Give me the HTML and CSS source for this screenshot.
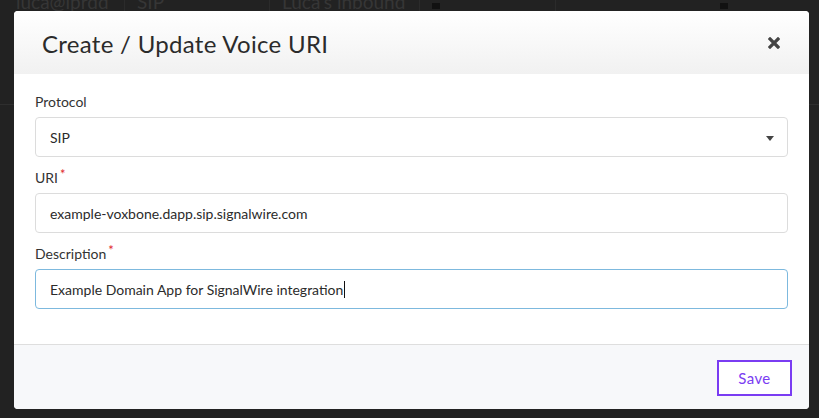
FILE: index.html
```html
<!DOCTYPE html>
<html>
<head>
<meta charset="utf-8">
<link rel="stylesheet" href="styles.css">
</head>
<body>
<div class="page">
  <div class="row">
    <div class="cell c1">luca@iprdd</div>
    <div class="cell c2">SIP</div>
    <div class="cell c3">Luca's inbound</div>
    <div class="cell c4"><span class="mark"></span></div>
    <div class="cell c5"><span class="mark"></span></div>
  </div>
  <div class="rowline"></div>
</div>
<div class="overlay">
  <div class="modal">
    <div class="modal-header">
      <h2 class="modal-title">Create / Update Voice URI</h2>
      <button class="close" aria-label="Close">
        <svg width="12" height="12" viewBox="0 0 12 12"><path d="M2 2 L10 10 M10 2 L2 10" stroke="#444" stroke-width="3.2" stroke-linecap="square"/></svg>
      </button>
    </div>
    <div class="modal-body">
      <div class="group">
        <label class="label">Protocol</label>
        <div class="control select">SIP<span class="caret"></span></div>
      </div>
      <div class="group">
        <label class="label">URI<span class="req">*</span></label>
        <div class="control">example-voxbone.dapp.sip.signalwire.com</div>
      </div>
      <div class="group last">
        <label class="label">Description<span class="req">*</span></label>
        <div class="control focus">Example Domain App for SignalWire integration<span class="cursor"></span></div>
      </div>
    </div>
    <div class="modal-footer">
      <button class="save">Save</button>
    </div>
  </div>
</div>
</body>
</html>
```
FILE: styles.css
```css
* { box-sizing: border-box; }
html, body { margin: 0; padding: 0; }
body {
  width: 819px;
  height: 418px;
  background: #222222;
  font-family: Lato, "Liberation Sans", sans-serif;
  overflow: hidden;
  position: relative;
}
.page { color: #363636; }
.row {
  display: flex;
  height: 112px;
  font-size: 19px;
  line-height: 1;
  margin-top: -8px;
}
.cell { padding: 0 0 0 16px; border-right: 1px solid #2b2b2b; }
.c1 { width: 125px; }
.c2 { width: 145px; padding-left: 12px; }
.c3 { width: 150px; padding-left: 12px; }
.c4 { width: 136px; padding-left: 12px; }
.c5 { flex: 1; border-right: none; padding-left: 164px; }
.mark { display: inline-block; width: 8px; height: 6px; background: #111; margin-top: 6px; }
.rowline { height: 1px; background: #2e2e2e; }

.overlay {
  position: absolute;
  inset: 0;
  padding: 11px 10px 9px 14px;
}
.modal {
  width: 795px;
  height: 398px;
  background: #fff;
  border-radius: 4px;
  overflow: hidden;
  display: flex;
  flex-direction: column;
}
.modal-header {
  height: 63px;
  background: linear-gradient(#ffffff, #f1f1f1);
  display: flex;
  align-items: center;
  justify-content: space-between;
  padding: 0 29px 0 28px;
}
.modal-title {
  margin: 0;
  font-family: Lato, "Liberation Sans", sans-serif;
  font-weight: 400;
  font-size: 24px;
  letter-spacing: 0.3px;
  color: #2b2b2b;
  padding-top: 2px;
}
.close {
  background: none;
  border: none;
  padding: 0;
  width: 12px;
  height: 12px;
  display: flex;
  margin-top: 1px;
}
.modal-body {
  flex: 1;
  padding: 18px 21px 0 21px;
}
.group { margin-bottom: 11px; }
.label {
  display: block;
  font-size: 14px;
  line-height: 20px;
  color: #333;
  margin-bottom: 5px;
}
.req { color: #e0262b; font-size: 13px; position: relative; top: -4px; margin-left: 2px; }
.control {
  height: 40px;
  border: 1px solid #dcdcdc;
  border-radius: 4px;
  padding: 0 14px;
  display: flex;
  align-items: center;
  font-size: 14px;
  color: #2b2b2b;
  position: relative;
}
.control.focus { border-color: #7db9de; }
.select .caret {
  position: absolute;
  right: 13px;
  top: 18px;
  width: 0; height: 0;
  border-left: 4px solid transparent;
  border-right: 4px solid transparent;
  border-top: 5px solid #444;
}
.cursor { display: inline-block; width: 1px; height: 17px; background: #111; margin-left: 1px; }
.modal-footer {
  height: 65px;
  border-top: 1px solid #dedede;
  background: #f7f8fa;
  display: flex;
  align-items: center;
  justify-content: flex-end;
  padding: 0 17px 0 0;
}
.save {
  width: 75px;
  height: 36px;
  border: 2px solid #7a3cf2;
  background: #fff;
  color: #7a3cf2;
  font-family: Lato, "Liberation Sans", sans-serif;
  font-size: 15px;
  letter-spacing: 0.4px;
  border-radius: 0;
  margin-top: 1px;
}
```
